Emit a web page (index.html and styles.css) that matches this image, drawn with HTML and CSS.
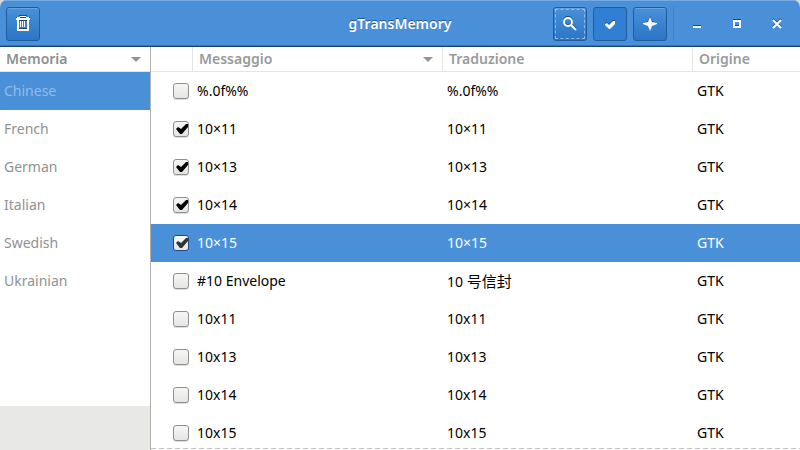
FILE: index.html
```html
<!DOCTYPE html>
<html lang="it">
<head>
<meta charset="utf-8">
<title>gTransMemory</title>
<link rel="stylesheet" href="styles.css">
</head>
<body>
<div class="window">
  <header class="headerbar">
    <div class="group">
      <button class="tool" type="button" aria-label="Elimina">
        <svg width="16" height="16" viewBox="0 0 16 16"><path class="shade" d="M4 -1h8v1H4zM1 1h14v1H1z"/><path d="M5 0h6v1h3v1h1v2H1V2h1V1h3zM2 4h2v9H2zM12 4h2v9h-2zM2 13h12v2H2zM5 5h1v6H5zM7 5h1v6H7zM9 5h1v6H9z"/><path class="shade" d="M5 1h6v1H5zM4 4h8v1H4zM4 12h8v1H4z"/></svg>
      </button>
    </div>
    <h1 class="title">gTransMemory</h1>
    <div class="group end">
      <button class="tool focused" type="button" aria-label="Cerca">
        <svg width="16" height="16" viewBox="0 0 16 16"><g class="shade-line" transform="translate(0 -1)"><circle cx="6" cy="6" r="4"/><path d="M9 9l5 5"/></g><g class="line"><circle cx="6" cy="6" r="4"/><path d="M9 9l5 5"/></g></svg>
      </button>
      <button class="tool pressed" type="button" aria-label="Seleziona" aria-pressed="true">
        <svg width="16" height="16" viewBox="0 0 16 16"><path class="shade" d="M3 7l2-1 2 2 4-4h2v3l-5 5H7L3 8z"/><path d="M3 8l2-1 2 2 4-4 2 0v3l-5 5H7L3 9z"/></svg>
      </button>
      <button class="tool" type="button" aria-label="Unisci">
        <svg width="16" height="16" viewBox="0 0 16 16"><path class="shade" d="M8 0l2 5 5 2-5 2-2 5-2-5-5-2 5-2z"/><path d="M8 1l2 5 5 1v1l-5 2-2 5-2-5-5-2V7l5-1z"/></svg>
      </button>
      <span class="separator"></span>
      <button class="control" type="button" aria-label="Riduci">
        <svg width="16" height="16" viewBox="0 0 16 16"><path class="shade" d="M4 9h8v1H4z"/><path d="M4 10h8v2H4z"/></svg>
      </button>
      <button class="control" type="button" aria-label="Massimizza">
        <svg width="16" height="16" viewBox="0 0 16 16"><path class="shade" d="M4 3h8v1H4zM6 9h4v1H6z"/><path fill-rule="evenodd" d="M4 4h8v8H4zM6 6v4h4V6z"/></svg>
      </button>
      <button class="control" type="button" aria-label="Chiudi">
        <svg width="16" height="16" viewBox="0 0 16 16"><path class="shade-line" d="M4 3l8 8M12 3l-8 8"/><path class="line" d="M4 4l8 8M12 4l-8 8"/></svg>
      </button>
    </div>
  </header>
  <div class="content">
    <aside class="sidebar">
      <button class="memory-head" type="button">Memoria <span class="arrow"></span></button>
      <ul class="memories">
        <li class="selected">Chinese</li>
        <li>French</li>
        <li>German</li>
        <li>Italian</li>
        <li>Swedish</li>
        <li>Ukrainian</li>
      </ul>
      <div class="sidebar-foot"></div>
    </aside>
    <main class="messages">
      <table>
        <colgroup><col class="col-check"><col class="col-text"><col class="col-text"><col></colgroup>
        <thead>
          <tr><th></th><th><button type="button">Messaggio <span class="arrow"></span></button></th><th><button type="button">Traduzione</button></th><th><button type="button">Origine</button></th></tr>
        </thead>
        <tbody>
          <tr><td><input type="checkbox" id="m0"></td><td><label for="m0">%.0f%%</label></td><td>%.0f%%</td><td>GTK</td></tr>
          <tr><td><input type="checkbox" id="m1" checked></td><td><label for="m1">10×11</label></td><td>10×11</td><td>GTK</td></tr>
          <tr><td><input type="checkbox" id="m2" checked></td><td><label for="m2">10×13</label></td><td>10×13</td><td>GTK</td></tr>
          <tr><td><input type="checkbox" id="m3" checked></td><td><label for="m3">10×14</label></td><td>10×14</td><td>GTK</td></tr>
          <tr class="selected"><td><input type="checkbox" id="m4" checked></td><td><label for="m4">10×15</label></td><td>10×15</td><td>GTK</td></tr>
          <tr><td><input type="checkbox" id="m5"></td><td><label for="m5">#10 Envelope</label></td><td>10 <span class="cjk" lang="zh-CN">号信封</span></td><td>GTK</td></tr>
          <tr><td><input type="checkbox" id="m6"></td><td><label for="m6">10x11</label></td><td>10x11</td><td>GTK</td></tr>
          <tr><td><input type="checkbox" id="m7"></td><td><label for="m7">10x13</label></td><td>10x13</td><td>GTK</td></tr>
          <tr><td><input type="checkbox" id="m8"></td><td><label for="m8">10x14</label></td><td>10x14</td><td>GTK</td></tr>
          <tr><td><input type="checkbox" id="m9"></td><td><label for="m9">10x15</label></td><td>10x15</td><td>GTK</td></tr>
        </tbody>
      </table>
    </main>
  </div>
</div>
</body>
</html>
```
FILE: styles.css
```css
* { box-sizing: border-box; }

body {
  margin: 0;
  background: #d8d8d4;
  color: #000;
  font: 14px/20px "Noto Sans", "Noto Sans CJK SC", sans-serif;
}

button { font: inherit; color: inherit; }

.window {
  display: flex;
  flex-direction: column;
  height: 100vh;
  overflow: hidden;
  border-radius: 7px 7px 0 0;
  background: #fff;
}

/* Header bar */
.headerbar {
  flex: none;
  display: grid;
  grid-template-columns: 1fr auto 1fr;
  align-items: center;
  height: 47px;
  padding: 0 6px;
  border-top: 1px solid #76abe1;
  border-bottom: 1px solid #184472;
  box-shadow: inset 0 -1px #2a76c6;
  background: #4a90d9;
  color: #fff;
}

.title {
  margin: 0;
  font-size: 14px;
  font-weight: 600;
  text-shadow: 0 -1px #22578f;
}

.group { display: flex; align-items: center; gap: 6px; }
.end { justify-content: flex-end; }

.tool,
.control {
  display: flex;
  align-items: center;
  justify-content: center;
  width: 34px;
  height: 34px;
  padding: 0;
  border: 0;
  background: none;
}

.tool {
  border: 1px solid #1f5c9c;
  border-radius: 3px;
  background: linear-gradient(#4a90d9, #2a76c6);
  box-shadow: inset 0 1px #69a3df;
}

.pressed { background: #307fd3; box-shadow: none; }

.focused { outline: 1px dashed #91bae7; outline-offset: -3px; }

.separator { width: 1px; height: 34px; background: #3f82c8; }

svg { fill: #fff; overflow: visible; }
.shade { fill: #174a80; }
.line { fill: none; stroke: #fff; stroke-width: 2; }
.shade-line { fill: none; stroke: #174a80; stroke-width: 2; }

/* Body */
.content { flex: 1; display: flex; min-height: 0; }

.sidebar {
  flex: none;
  display: flex;
  flex-direction: column;
  width: 151px;
  border-right: 1px solid #b1b1ac;
}

.memory-head,
th button {
  display: flex;
  align-items: center;
  justify-content: space-between;
  width: 100%;
  height: 24px;
  padding: 0 9px 0 6px;
  border: 0;
  background: none;
  color: #979b9b;
  font-weight: 600;
}

.memory-head {
  flex: none;
  height: 25px;
  border-bottom: 1px solid #e4e4e2;
  color: #8b8f8f;
}

.arrow {
  border: 5px solid transparent;
  border-top-color: #929595;
  border-bottom: 0;
}

.memories {
  flex: 1;
  min-height: 0;
  margin: 0;
  padding: 0;
  list-style: none;
  color: #8f9292;
}

.memories li { padding: 9px 4px; }
.memories .selected { background: #4a90d9; color: #91bbe8; }

.sidebar-foot { flex: none; height: 44px; background: #e8e8e6; }

/* Message list */
.messages { position: relative; flex: 1; min-width: 0; overflow: hidden; }

.messages::after {
  content: "";
  position: absolute;
  right: 0;
  bottom: 1px;
  left: 0;
  height: 1px;
  background: repeating-linear-gradient(90deg, #c3c3c0 0 5px, #fff 5px 8px);
}

table { width: 100%; border-collapse: separate; border-spacing: 0; table-layout: fixed; }
.col-check { width: 42px; }
.col-text { width: 250px; }

th {
  height: 25px;
  padding: 0;
  border-right: 1px solid #e4e4e2;
  border-bottom: 1px solid #e4e4e2;
}
th:last-child { border-right: 0; }

td { height: 38px; padding: 0 4px; white-space: nowrap; }
td:first-child { padding: 0 4px 0 0; }
tbody .selected { background: #4a90d9; color: #fff; }
.cjk { font-size: 15px; }

input {
  appearance: none;
  display: block;
  width: 16px;
  height: 16px;
  margin: 0 0 0 auto;
  border: 1px solid #8e908f;
  border-radius: 3px;
  background: linear-gradient(#f6f6f5, #e5e5e4);
  box-shadow: 0 1px #dededc;
}

input:checked::after {
  content: "";
  display: block;
  width: 14px;
  height: 12px;
  background: #000;
  clip-path: polygon(2px 7px, 4px 5px, 7px 7px, 12px 2px, 14px 2px, 14px 5px, 8px 12px, 6px 12px);
}

.selected input { border-color: #1c4e84; box-shadow: none; }
.selected input:checked::after { background: #2e3436; }
```
